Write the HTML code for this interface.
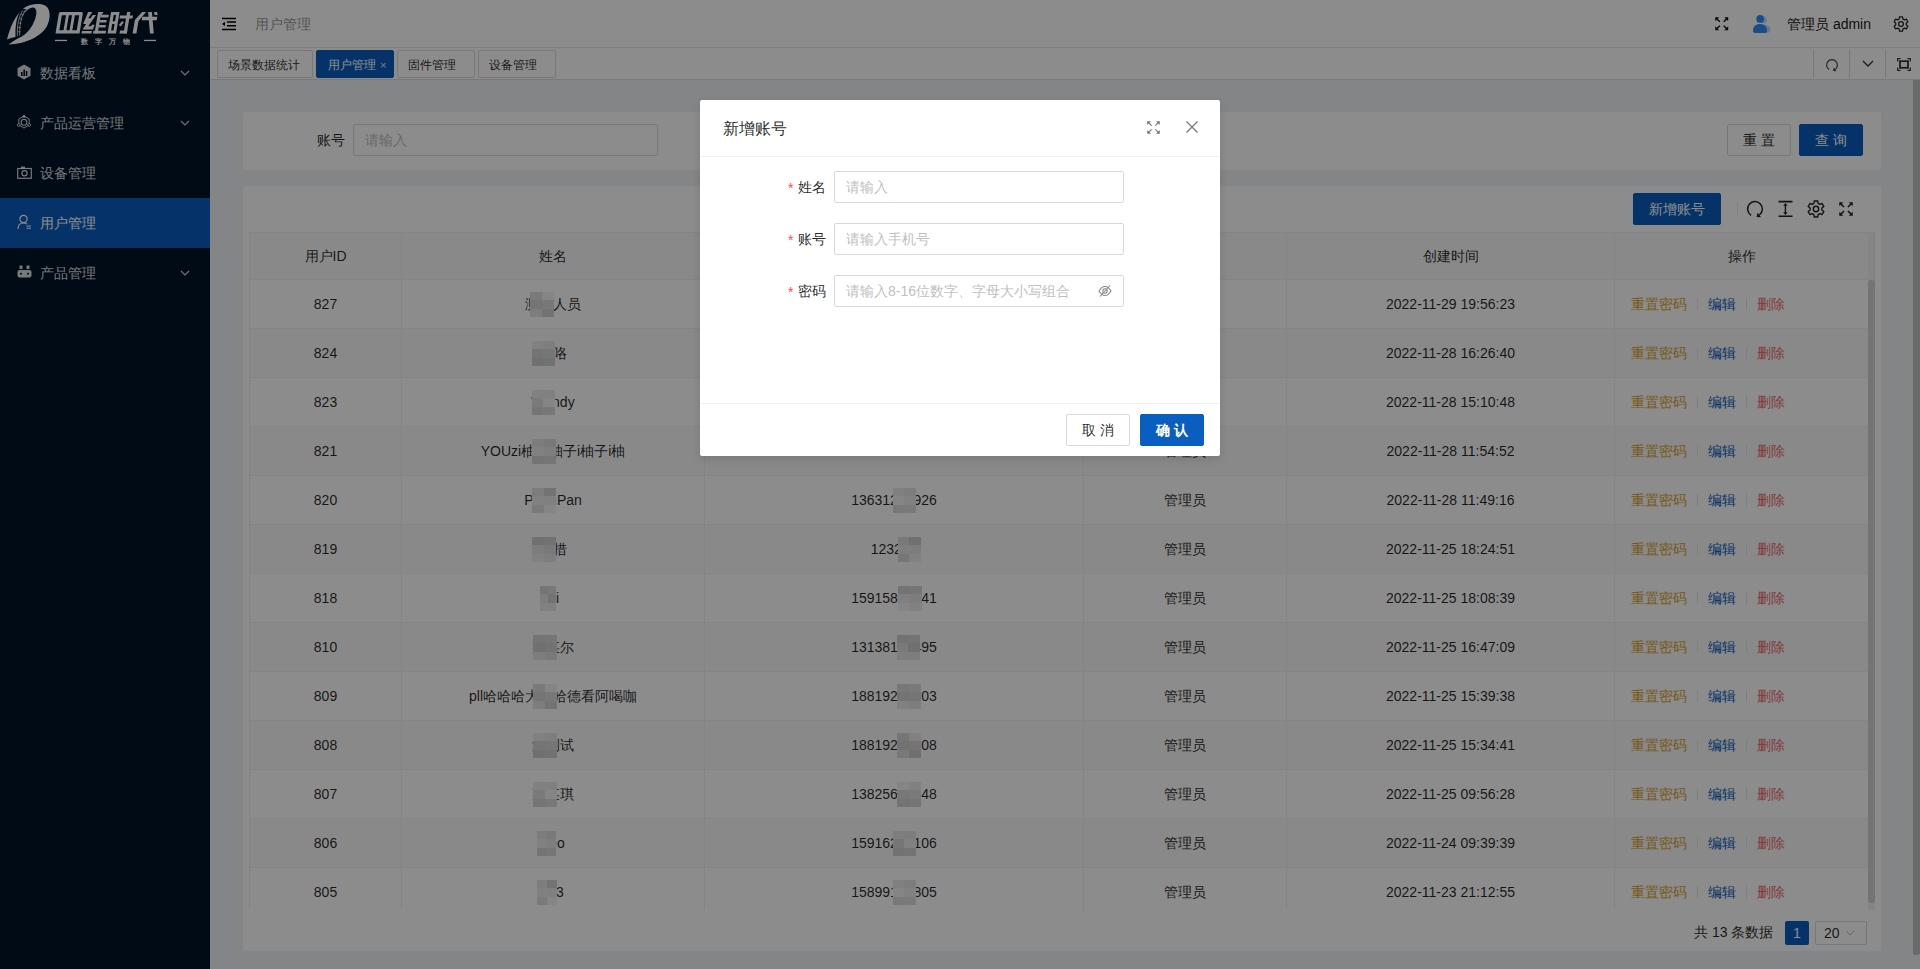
<!DOCTYPE html>
<html><head><meta charset="utf-8">
<style>
*{box-sizing:border-box;margin:0;padding:0}
html,body{width:1920px;height:969px;overflow:hidden;font-family:"Liberation Sans",sans-serif;font-size:14px;color:rgba(0,0,0,.85);background:#f0f2f5;position:relative}
.abs{position:absolute}
#side{position:absolute;left:0;top:0;width:210px;height:969px;background:#001529;overflow:hidden}
.mt{position:absolute;left:40px;height:50px;line-height:50px;color:rgba(255,255,255,.85);font-size:14px;white-space:nowrap}
#hdr{position:absolute;left:210px;top:0;width:1710px;height:48px;background:#fff;border-bottom:1px solid #e6e6e6}
#tabs{position:absolute;left:210px;top:48px;width:1710px;height:32px;background:#fff;border-bottom:1px solid #dcdcdc}
.tab{position:absolute;top:50px;height:28px;border:1px solid #dcdcdc;border-radius:2px;font-size:12px;line-height:27px;padding-top:1px;color:rgba(0,0,0,.85);background:#fff;white-space:nowrap}
.tab.on{background:#0a5ec0;border-color:#0a5ec0;color:#fff}
.card{position:absolute;background:#fff;border-radius:2px}
.inp{position:absolute;border:1px solid #d9d9d9;border-radius:2px;background:#fff;color:#bfbfbf;font-size:14px;line-height:30px;padding-left:11px;white-space:nowrap}
.btn{position:absolute;border:1px solid #d9d9d9;border-radius:2px;background:#fff;text-align:center;font-size:14px;line-height:30px;color:rgba(0,0,0,.85);white-space:nowrap}
.btn.pri{background:#0a5ec0;border-color:#0a5ec0;color:#fff}
.th{position:absolute;top:232px;height:48px;line-height:47px;padding-top:1px;text-align:center;background:#fafafa;border-bottom:1px solid #f0f0f0;border-right:1px solid #f0f0f0;white-space:nowrap}
.td{position:absolute;height:49px;line-height:48px;text-align:center;border-bottom:1px solid #f0f0f0;border-right:1px solid #f0f0f0;white-space:nowrap;overflow:hidden}
.blr{display:inline-block;height:24px;vertical-align:middle;background:linear-gradient(rgba(95,95,95,.38) 0,rgba(95,95,95,.38) 50%,rgba(130,130,130,.22) 50%,rgba(130,130,130,.22) 100%);margin-top:-4px}
.op1{color:#d9a32e}.op2{color:#0a5ec0}.op3{color:#ec6a6e}
.sep{display:inline-block;width:1px;height:12px;background:#e8e8e8;vertical-align:middle;margin:0 10px;margin-top:-2px}
#mask{position:absolute;left:0;top:0;width:1920px;height:969px;background:rgba(0,0,0,.45)}
#modal{position:absolute;left:700px;top:100px;width:520px;height:356px;background:#fff;border-radius:2px;box-shadow:0 3px 10px rgba(0,0,0,.12)}
.lbl{position:absolute;font-size:14px;color:rgba(0,0,0,.85);white-space:nowrap}
.req{color:#ff4d4f;font-family:"Liberation Sans",sans-serif;font-size:14px;margin-right:5px;position:relative;top:1px}
</style></head><body>

<div id="side">
<svg class="abs" style="left:0;top:0" width="210" height="48" viewBox="0 0 210 48">
<path d="M7 39.5 C 10 27, 16 14, 24 8 C 30 4, 40 2.5, 46 6 C 51 10, 50.5 19, 47 26 C 41 37, 25 44, 8.5 44.5 C 14 40.5, 19 37.5, 24 35.5 C 18 36, 12 37.5, 7 39.5 Z" fill="#fff"/>
<ellipse cx="26.6" cy="21.8" rx="16" ry="6.8" transform="rotate(-61 26.6 21.8)" fill="#001529"/>
<path d="M22 8.8 C 17.5 14, 14.8 24, 15.6 37.5 L 19.5 36.5 C 19 27, 21 16, 26.5 9.2 Z" fill="#001529"/>
<path d="M22.8 10.5 C 19 16, 16.8 25, 17.4 36.2" fill="none" stroke="#fff" stroke-width="0.75"/>
<path d="M25.2 10 C 21.5 15.5, 19.3 25, 19.7 35.5" fill="none" stroke="#fff" stroke-width="0.75"/>
<path d="M20.8 14.2 L 23.8 15 M19.6 18.6 L 22.4 19.2 M18.6 23 L 21.4 23.4 M18 27.4 L 20.8 27.6 M17.8 31.8 L 20.5 31.8" stroke="#fff" stroke-width="0.7"/>
<g fill="#fff" transform="translate(0,33.5) skewX(-9.5) translate(0,-33.5)">
 <path fill-rule="evenodd" d="M55.5 13.5 Q55.5 12 57 12 H78 Q79.5 12 79.5 13.5 V33.5 H55.5Z M58.8 15.3 V30.2 H63 V15.3Z M65.8 15.3 V30.2 H69 V15.3Z M71.8 15.3 V30.2 H76.2 V15.3Z"/>
 <path d="M84.5 12 L88.8 12 L85.6 18.2 L88 18.2 L89.6 15 L93 15 L87 26.2 L90 26.2 L90.6 24.8 L93.2 24.8 L92.2 29.6 L81.8 29.6 L84.6 24 L81.6 24 Z"/>
 <rect x="81.5" y="31" width="10" height="2.5"/>
 <rect x="94.5" y="12" width="3.2" height="21.5"/>
 <rect x="97.7" y="14.8" width="8" height="2.8"/>
 <rect x="97.7" y="20" width="6.8" height="2.6"/>
 <rect x="97.7" y="25" width="6.8" height="2.6"/>
 <rect x="93" y="30.7" width="12.7" height="2.8"/>
 <path d="M96 12 L100 12 L98.5 14.8 L95 14.8Z"/>
 <path fill-rule="evenodd" d="M107.5 12 H116 V33.5 H107.5Z M110.6 15 V21.3 H113 V15Z M110.6 24 V30.5 H113 V24Z"/>
 <rect x="117" y="15.5" width="13" height="3"/>
 <rect x="123.5" y="12" width="3.3" height="21.5"/>
 <rect x="119.5" y="30.5" width="7.3" height="3"/>
 <path d="M117.5 25 L120 21 L122 22.2 L119.5 26.5Z"/>
 <path d="M138.5 12 L142.5 12 L136.4 21 L136.4 33.5 L132.6 33.5 L132.6 20 Z"/>
 <rect x="139.5" y="16.8" width="15" height="3.4"/>
 <path d="M144.5 12 L148.3 12 L153.8 33.5 L150 33.5Z"/>
 <path d="M150.5 12 L153.5 12 L154.5 15 L151.5 15Z"/>
</g>
<rect x="55" y="39.8" width="12" height="1.3" fill="#fff"/><rect x="144" y="39.8" width="12" height="1.3" fill="#fff"/>
<text x="81" y="44" font-family="Liberation Sans,sans-serif" font-size="7" font-weight="bold" fill="#fff" letter-spacing="7">数字万物</text>
</svg>
<div class="mt" style="top:48px;">数据看板</div>
<svg class="abs" style="left:180px;top:70px" width="10" height="6" viewBox="0 0 10 6"><path d="M1 1 L5 5 L9 1" fill="none" stroke="rgba(255,255,255,.8)" stroke-width="1.2"/></svg>
<div class="mt" style="top:98px;">产品运营管理</div>
<svg class="abs" style="left:180px;top:120px" width="10" height="6" viewBox="0 0 10 6"><path d="M1 1 L5 5 L9 1" fill="none" stroke="rgba(255,255,255,.8)" stroke-width="1.2"/></svg>
<div class="mt" style="top:148px;">设备管理</div>
<div class="abs" style="left:0;top:198px;width:210px;height:50px;background:#0a5ec0"></div>
<div class="mt" style="top:198px;color:#fff">用户管理</div>
<div class="mt" style="top:248px;">产品管理</div>
<svg class="abs" style="left:180px;top:270px" width="10" height="6" viewBox="0 0 10 6"><path d="M1 1 L5 5 L9 1" fill="none" stroke="rgba(255,255,255,.8)" stroke-width="1.2"/></svg>
<svg class="abs" viewBox="0 0 14 16" style="left:17px;top:64px;width:14px;height:16px"><path d="M7 0.5 L13.5 4.2 V11.8 L7 15.5 L0.5 11.8 V4.2Z" fill="rgba(255,255,255,.85)"/><rect x="4" y="8" width="1.6" height="4" fill="#001529"/><rect x="6.4" y="5.5" width="1.6" height="6.5" fill="#001529"/><rect x="8.8" y="7" width="1.6" height="5" fill="#001529"/></svg>
<svg class="abs" style="left:16px;top:114px" width="16" height="16" viewBox="0 0 16 16"><path d="M8.00 2.00 L13.20 5.00 L13.20 11.00 L8.00 14.00 L2.80 11.00 L2.80 5.00Z" fill="none" stroke="rgba(255,255,255,.8)" stroke-width="1"/><circle cx="8" cy="8.3" r="2.9" fill="none" stroke="rgba(255,255,255,.8)" stroke-width="1.1"/><circle cx="8.00" cy="2.50" r="1.4" fill="rgba(255,255,255,.8)"/><circle cx="13.20" cy="11.00" r="1.4" fill="#001529" stroke="rgba(255,255,255,.8)" stroke-width="0.9"/><circle cx="2.80" cy="11.00" r="1.4" fill="#001529" stroke="rgba(255,255,255,.8)" stroke-width="0.9"/></svg>
<svg class="abs" style="left:17px;top:166px" width="15" height="13" viewBox="0 0 15 13"><rect x="0.7" y="2.5" width="13.6" height="9.8" fill="none" stroke="rgba(255,255,255,.85)" stroke-width="1.2"/><rect x="4" y="0.6" width="4" height="2" fill="rgba(255,255,255,.85)"/><circle cx="7.5" cy="7.3" r="2.6" fill="none" stroke="rgba(255,255,255,.85)" stroke-width="1.2"/></svg>
<svg class="abs" style="left:17px;top:214px" width="15" height="16" viewBox="0 0 15 16"><circle cx="6.5" cy="5" r="3.6" fill="none" stroke="#fff" stroke-width="1.2"/><path d="M1 15 C1 10.5 3.5 9 6.5 9 C8 9 9 9.3 10 10" fill="none" stroke="#fff" stroke-width="1.2"/><path d="M9.5 12 H14 M9.5 14.3 H14" stroke="#fff" stroke-width="1.1"/></svg>
<svg class="abs" style="left:17px;top:265px" width="15" height="13" viewBox="0 0 15 13"><rect x="0.5" y="5" width="14" height="7.5" rx="2" fill="rgba(255,255,255,.85)"/><rect x="2.5" y="0.5" width="3" height="3.5" fill="rgba(255,255,255,.85)"/><rect x="9.5" y="0.5" width="3" height="3.5" fill="rgba(255,255,255,.85)"/><circle cx="4" cy="8.7" r="1" fill="#001529"/><circle cx="11" cy="8.7" r="1" fill="#001529"/></svg>
</div>
<div id="hdr"></div>
<svg class="abs" style="left:222px;top:17px" width="14" height="14" viewBox="0 0 14 14"><path d="M0 1.4 H14 M5 5.1 H14 M5 8.8 H14 M0 12.4 H14" stroke="#000" stroke-width="1.5"/><path d="M0 6.9 L3 4.7 V9.1Z" fill="#000"/></svg>
<div class="abs" style="left:255px;top:14px;font-size:14px;line-height:20px;color:rgba(0,0,0,.45)">用户管理</div>
<svg class="abs" style="left:1715px;top:17px" width="13.5" height="13.5" viewBox="0 0 14 14"><g stroke="#111" stroke-width="1.4" fill="none"><path d="M1 1 L5 5 M9 5 L13 1 M1 13 L5 9 M9 9 L13 13"/></g><g fill="#111"><path d="M0.3 0.3 H4.3 L0.3 4.3Z"/><path d="M13.7 0.3 V4.3 L9.7 0.3Z"/><path d="M0.3 13.7 V9.7 L4.3 13.7Z"/><path d="M13.7 13.7 H9.7 L13.7 9.7Z"/></g></svg>
<svg class="abs" style="left:1752px;top:14px" width="20" height="20" viewBox="0 0 20 20"><circle cx="11.5" cy="6" r="3.4" fill="#308cf8" opacity=".3"/><path d="M11 10.5 C15.5 10.5 18.5 12 18.5 15.5 C18.5 18 17 19 14.5 19 H10Z" fill="#308cf8" opacity=".3"/><circle cx="8.2" cy="4.9" r="3.9" fill="#308cf8"/><path d="M1 17 C1 12 4 10 8 10 C12 10 15 12 15 17 C15 18.5 14 19 12.5 19 H3.5 C2 19 1 18.5 1 17Z" fill="#308cf8"/></svg>
<div class="abs" style="left:1787px;top:14px;font-size:14px;line-height:20px;color:rgba(0,0,0,.92);white-space:nowrap">管理员 admin</div>
<svg class="abs" style="left:1893px;top:16px" width="16" height="16" viewBox="0 0 16 16"><path d="M6.11 3.07 L6.50 0.96 L9.50 0.96 L9.89 3.07 L11.32 3.90 L13.35 3.18 L14.85 5.78 L13.21 7.17 L13.21 8.83 L14.85 10.22 L13.35 12.82 L11.32 12.10 L9.89 12.93 L9.50 15.04 L6.50 15.04 L6.11 12.93 L4.68 12.10 L2.65 12.82 L1.15 10.22 L2.79 8.83 L2.79 7.17 L1.15 5.78 L2.65 3.18 L4.68 3.90Z" fill="none" stroke="#222" stroke-width="1.25" stroke-linejoin="round"/><circle cx="8.0" cy="8.0" r="2.40" fill="none" stroke="#222" stroke-width="1.25"/></svg>
<div id="tabs"></div>
<div class="tab" style="left:217px;width:96px;padding-left:10px">场景数据统计</div>
<div class="tab on" style="left:316px;width:78px;padding-left:11px">用户管理<span style="font-size:11px;margin-left:4px;opacity:.85">×</span></div>
<div class="tab" style="left:397px;width:78px;padding-left:10px">固件管理</div>
<div class="tab" style="left:478px;width:78px;padding-left:10px">设备管理</div>
<div class="abs" style="left:1813px;top:50px;width:1px;height:28px;background:#dcdcdc"></div>
<div class="abs" style="left:1849px;top:50px;width:1px;height:28px;background:#dcdcdc"></div>
<div class="abs" style="left:1885px;top:50px;width:1px;height:28px;background:#dcdcdc"></div>
<svg class="abs" style="left:1862px;top:60px" width="12" height="8" viewBox="0 0 12 8"><path d="M1 1 L6 6 L11 1" fill="none" stroke="#333" stroke-width="1.4"/></svg>
<svg class="abs" style="left:1897px;top:58px" width="14" height="13" viewBox="0 0 14 13"><path d="M0.7 3.5 V0.7 H3.5 M10.5 0.7 H13.3 V3.5 M13.3 9.5 V12.3 H10.5 M3.5 12.3 H0.7 V9.5" fill="none" stroke="#333" stroke-width="1.2"/><rect x="3" y="3.2" width="8" height="6.6" fill="none" stroke="#333" stroke-width="1.8"/></svg>
<div class="abs" style="left:1913px;top:80px;width:7px;height:875px;background:#c1c1c1;border-radius:0 0 3px 3px"></div>
<div class="card" style="left:243px;top:112px;width:1638px;height:58px"></div>
<div class="lbl" style="left:317px;top:130px;line-height:20px">账号</div>
<div class="inp" style="left:353px;top:124px;width:305px;height:32px">请输入</div>
<div class="btn" style="left:1727px;top:124px;width:64px;height:32px;letter-spacing:4px;padding-left:4px">重置</div>
<div class="btn pri" style="left:1799px;top:124px;width:64px;height:32px;letter-spacing:4px;padding-left:4px">查询</div>
<div class="card" style="left:243px;top:186px;width:1638px;height:765px"></div>
<div class="btn pri" style="left:1633px;top:193px;width:88px;height:32px">新增账号</div>
<div class="abs" style="left:1737px;top:202px;width:1px;height:13px;background:#e8e8e8"></div>
<svg class="abs" style="left:1746px;top:200px" width="18" height="18" viewBox="0 0 18 18"><path d="M5.08 15.28 A7.4 7.4 0 1 1 13.35 14.99" fill="none" stroke="#222" stroke-width="1.5"/><path d="M10.55 17.02 L15.04 17.32 L11.66 12.66Z" fill="#222"/></svg>
<svg class="abs" style="left:1778px;top:200px" width="15" height="18" viewBox="0 0 15 18"><path d="M0.5 1.6 H14.5 M0.5 16.3 H14.5" stroke="#222" stroke-width="1.6"/><path d="M7.4 5 V13" stroke="#222" stroke-width="1.4"/><path d="M7.4 3 L5.2 5.8 H9.6Z M7.4 15 L5.2 12.2 H9.6Z" fill="#222"/></svg>
<svg class="abs" style="left:1807px;top:200px" width="18" height="18" viewBox="0 0 18 18"><path d="M6.87 3.45 L7.30 0.98 L10.70 0.98 L11.13 3.45 L12.74 4.38 L15.09 3.51 L16.80 6.47 L14.87 8.07 L14.87 9.93 L16.80 11.53 L15.09 14.49 L12.74 13.62 L11.13 14.55 L10.70 17.02 L7.30 17.02 L6.87 14.55 L5.26 13.62 L2.91 14.49 L1.20 11.53 L3.13 9.93 L3.13 8.07 L1.20 6.47 L2.91 3.51 L5.26 4.38Z" fill="none" stroke="#222" stroke-width="1.4" stroke-linejoin="round"/><circle cx="9.0" cy="9.0" r="2.70" fill="none" stroke="#222" stroke-width="1.4"/></svg>
<svg class="abs" style="left:1825px;top:58px" width="14" height="14" viewBox="0 0 14 14"><path d="M4.14 11.58 A5.4 5.4 0 1 1 10.17 11.37" fill="none" stroke="#444" stroke-width="1.2"/><path d="M8.00 12.95 L11.49 13.18 L8.86 9.56Z" fill="#444"/></svg>
<svg class="abs" style="left:1839px;top:202px" width="14" height="14" viewBox="0 0 14 14"><g stroke="#222" stroke-width="1.6" fill="none"><path d="M1 1 L5 5 M9 5 L13 1 M1 13 L5 9 M9 9 L13 13"/></g><g fill="#222"><path d="M0.3 0.3 H4.3 L0.3 4.3Z"/><path d="M13.7 0.3 V4.3 L9.7 0.3Z"/><path d="M0.3 13.7 V9.7 L4.3 13.7Z"/><path d="M13.7 13.7 H9.7 L13.7 9.7Z"/></g></svg>
<div class="th" style="left:250px;width:152px;border-right:1px solid #f0f0f0">用户ID</div>
<div class="th" style="left:402px;width:303px;border-right:1px solid #f0f0f0">姓名</div>
<div class="th" style="left:705px;width:379px;border-right:1px solid #f0f0f0">账号</div>
<div class="th" style="left:1084px;width:203px;border-right:1px solid #f0f0f0">角色</div>
<div class="th" style="left:1287px;width:328px;border-right:1px solid #f0f0f0">创建时间</div>
<div class="th" style="left:1615px;width:253px;border-right:none">操作</div>
<div class="abs" style="left:1868px;top:232px;width:7px;height:48px;background:#f2f2f2;border-right:1px solid #e8e8e8;border-bottom:1px solid #f0f0f0"></div>
<div class="abs" style="left:0;top:280px;width:1920px;height:630px;overflow:hidden">
<div class="td" style="left:250px;top:0px;width:152px;background:#fff;">827</div>
<div class="td" style="left:402px;top:0px;width:303px;background:#fff;">测试人员</div>
<div class="td" style="left:705px;top:0px;width:379px;background:#fff;">15000000001</div>
<div class="td" style="left:1084px;top:0px;width:203px;background:#fff;">管理员</div>
<div class="td" style="left:1287px;top:0px;width:328px;background:#fff;">2022-11-29 19:56:23</div>
<div class="td" style="left:1615px;top:0px;width:253px;background:#fff;border-right:none;text-align:left;padding-left:16px;"><span class="op1">重置密码</span><span class="sep"></span><span class="op2">编辑</span><span class="sep"></span><span class="op3">删除</span></div>
<div class="abs" style="left:530px;top:12px;width:12px;height:8px;background:#dedede"></div>
<div class="abs" style="left:542px;top:12px;width:12px;height:8px;background:#f2f2f2"></div>
<div class="abs" style="left:530px;top:20px;width:12px;height:9px;background:#d6d6d6"></div>
<div class="abs" style="left:542px;top:20px;width:12px;height:9px;background:#dadada"></div>
<div class="abs" style="left:530px;top:29px;width:12px;height:8px;background:#e3e3e3"></div>
<div class="abs" style="left:542px;top:29px;width:12px;height:8px;background:#d2d2d2"></div>
<div class="td" style="left:250px;top:49px;width:152px;background:#fafafa;">824</div>
<div class="td" style="left:402px;top:49px;width:303px;background:#fafafa;">某咯</div>
<div class="td" style="left:705px;top:49px;width:379px;background:#fafafa;">15000000002</div>
<div class="td" style="left:1084px;top:49px;width:203px;background:#fafafa;">管理员</div>
<div class="td" style="left:1287px;top:49px;width:328px;background:#fafafa;">2022-11-28 16:26:40</div>
<div class="td" style="left:1615px;top:49px;width:253px;background:#fafafa;border-right:none;text-align:left;padding-left:16px;"><span class="op1">重置密码</span><span class="sep"></span><span class="op2">编辑</span><span class="sep"></span><span class="op3">删除</span></div>
<div class="abs" style="left:532px;top:61px;width:11px;height:8px;background:#ececec"></div>
<div class="abs" style="left:543px;top:61px;width:12px;height:8px;background:#e6e6e6"></div>
<div class="abs" style="left:532px;top:69px;width:11px;height:9px;background:#d4d4d4"></div>
<div class="abs" style="left:543px;top:69px;width:12px;height:9px;background:#d8d8d8"></div>
<div class="abs" style="left:532px;top:78px;width:11px;height:8px;background:#cccccc"></div>
<div class="abs" style="left:543px;top:78px;width:12px;height:8px;background:#d0d0d0"></div>
<div class="td" style="left:250px;top:98px;width:152px;background:#fff;">823</div>
<div class="td" style="left:402px;top:98px;width:303px;background:#fff;">Wendy</div>
<div class="td" style="left:705px;top:98px;width:379px;background:#fff;">15000000003</div>
<div class="td" style="left:1084px;top:98px;width:203px;background:#fff;">管理员</div>
<div class="td" style="left:1287px;top:98px;width:328px;background:#fff;">2022-11-28 15:10:48</div>
<div class="td" style="left:1615px;top:98px;width:253px;background:#fff;border-right:none;text-align:left;padding-left:16px;"><span class="op1">重置密码</span><span class="sep"></span><span class="op2">编辑</span><span class="sep"></span><span class="op3">删除</span></div>
<div class="abs" style="left:532px;top:110px;width:11px;height:8px;background:#ececec"></div>
<div class="abs" style="left:543px;top:110px;width:12px;height:8px;background:#e9e9e9"></div>
<div class="abs" style="left:532px;top:118px;width:11px;height:9px;background:#dedede"></div>
<div class="abs" style="left:543px;top:118px;width:12px;height:9px;background:#f2f2f2"></div>
<div class="abs" style="left:532px;top:127px;width:11px;height:8px;background:#d6d6d6"></div>
<div class="abs" style="left:543px;top:127px;width:12px;height:8px;background:#dadada"></div>
<div class="td" style="left:250px;top:147px;width:152px;background:#fafafa;">821</div>
<div class="td" style="left:402px;top:147px;width:303px;background:#fafafa;">YOUzi柚子柚子i柚子i柚</div>
<div class="td" style="left:705px;top:147px;width:379px;background:#fafafa;">15000000004</div>
<div class="td" style="left:1084px;top:147px;width:203px;background:#fafafa;">管理员</div>
<div class="td" style="left:1287px;top:147px;width:328px;background:#fafafa;">2022-11-28 11:54:52</div>
<div class="td" style="left:1615px;top:147px;width:253px;background:#fafafa;border-right:none;text-align:left;padding-left:16px;"><span class="op1">重置密码</span><span class="sep"></span><span class="op2">编辑</span><span class="sep"></span><span class="op3">删除</span></div>
<div class="abs" style="left:532px;top:159px;width:12px;height:8px;background:#e3e3e3"></div>
<div class="abs" style="left:544px;top:159px;width:12px;height:8px;background:#dddddd"></div>
<div class="abs" style="left:532px;top:167px;width:12px;height:9px;background:#ececec"></div>
<div class="abs" style="left:544px;top:167px;width:12px;height:9px;background:#e6e6e6"></div>
<div class="abs" style="left:532px;top:176px;width:12px;height:8px;background:#d4d4d4"></div>
<div class="abs" style="left:544px;top:176px;width:12px;height:8px;background:#d8d8d8"></div>
<div class="td" style="left:250px;top:196px;width:152px;background:#fff;">820</div>
<div class="td" style="left:402px;top:196px;width:303px;background:#fff;">PeenPan</div>
<div class="td" style="left:705px;top:196px;width:379px;background:#fff;">13631234926</div>
<div class="td" style="left:1084px;top:196px;width:203px;background:#fff;">管理员</div>
<div class="td" style="left:1287px;top:196px;width:328px;background:#fff;">2022-11-28 11:49:16</div>
<div class="td" style="left:1615px;top:196px;width:253px;background:#fff;border-right:none;text-align:left;padding-left:16px;"><span class="op1">重置密码</span><span class="sep"></span><span class="op2">编辑</span><span class="sep"></span><span class="op3">删除</span></div>
<div class="abs" style="left:532px;top:208px;width:12px;height:8px;background:#e3e3e3"></div>
<div class="abs" style="left:544px;top:208px;width:12px;height:8px;background:#d2d2d2"></div>
<div class="abs" style="left:532px;top:216px;width:12px;height:9px;background:#ececec"></div>
<div class="abs" style="left:544px;top:216px;width:12px;height:9px;background:#e9e9e9"></div>
<div class="abs" style="left:532px;top:225px;width:12px;height:8px;background:#dedede"></div>
<div class="abs" style="left:544px;top:225px;width:12px;height:8px;background:#f2f2f2"></div>
<div class="abs" style="left:893px;top:208px;width:11px;height:8px;background:#e9e9e9"></div>
<div class="abs" style="left:904px;top:208px;width:12px;height:8px;background:#e3e3e3"></div>
<div class="abs" style="left:893px;top:216px;width:11px;height:9px;background:#f2f2f2"></div>
<div class="abs" style="left:904px;top:216px;width:12px;height:9px;background:#ececec"></div>
<div class="abs" style="left:893px;top:225px;width:11px;height:8px;background:#dadada"></div>
<div class="abs" style="left:904px;top:225px;width:12px;height:8px;background:#dedede"></div>
<div class="td" style="left:250px;top:245px;width:152px;background:#fafafa;">819</div>
<div class="td" style="left:402px;top:245px;width:303px;background:#fafafa;">某措</div>
<div class="td" style="left:705px;top:245px;width:379px;background:#fafafa;">123245</div>
<div class="td" style="left:1084px;top:245px;width:203px;background:#fafafa;">管理员</div>
<div class="td" style="left:1287px;top:245px;width:328px;background:#fafafa;">2022-11-25 18:24:51</div>
<div class="td" style="left:1615px;top:245px;width:253px;background:#fafafa;border-right:none;text-align:left;padding-left:16px;"><span class="op1">重置密码</span><span class="sep"></span><span class="op2">编辑</span><span class="sep"></span><span class="op3">删除</span></div>
<div class="abs" style="left:532px;top:257px;width:12px;height:8px;background:#cccccc"></div>
<div class="abs" style="left:544px;top:257px;width:12px;height:8px;background:#d0d0d0"></div>
<div class="abs" style="left:532px;top:265px;width:12px;height:9px;background:#e3e3e3"></div>
<div class="abs" style="left:544px;top:265px;width:12px;height:9px;background:#dddddd"></div>
<div class="abs" style="left:532px;top:274px;width:12px;height:8px;background:#ececec"></div>
<div class="abs" style="left:544px;top:274px;width:12px;height:8px;background:#e6e6e6"></div>
<div class="abs" style="left:898px;top:257px;width:11px;height:8px;background:#dddddd"></div>
<div class="abs" style="left:909px;top:257px;width:12px;height:8px;background:#cccccc"></div>
<div class="abs" style="left:898px;top:265px;width:11px;height:9px;background:#e6e6e6"></div>
<div class="abs" style="left:909px;top:265px;width:12px;height:9px;background:#e3e3e3"></div>
<div class="abs" style="left:898px;top:274px;width:11px;height:8px;background:#d8d8d8"></div>
<div class="abs" style="left:909px;top:274px;width:12px;height:8px;background:#ececec"></div>
<div class="td" style="left:250px;top:294px;width:152px;background:#fff;">818</div>
<div class="td" style="left:402px;top:294px;width:303px;background:#fff;">Xi</div>
<div class="td" style="left:705px;top:294px;width:379px;background:#fff;">15915812341</div>
<div class="td" style="left:1084px;top:294px;width:203px;background:#fff;">管理员</div>
<div class="td" style="left:1287px;top:294px;width:328px;background:#fff;">2022-11-25 18:08:39</div>
<div class="td" style="left:1615px;top:294px;width:253px;background:#fff;border-right:none;text-align:left;padding-left:16px;"><span class="op1">重置密码</span><span class="sep"></span><span class="op2">编辑</span><span class="sep"></span><span class="op3">删除</span></div>
<div class="abs" style="left:540px;top:306px;width:8px;height:8px;background:#d6d6d6"></div>
<div class="abs" style="left:548px;top:306px;width:8px;height:8px;background:#dadada"></div>
<div class="abs" style="left:540px;top:314px;width:8px;height:9px;background:#e3e3e3"></div>
<div class="abs" style="left:548px;top:314px;width:8px;height:9px;background:#d2d2d2"></div>
<div class="abs" style="left:540px;top:323px;width:8px;height:8px;background:#ececec"></div>
<div class="abs" style="left:548px;top:323px;width:8px;height:8px;background:#e9e9e9"></div>
<div class="abs" style="left:898px;top:306px;width:12px;height:8px;background:#d2d2d2"></div>
<div class="abs" style="left:910px;top:306px;width:12px;height:8px;background:#d6d6d6"></div>
<div class="abs" style="left:898px;top:314px;width:12px;height:9px;background:#e9e9e9"></div>
<div class="abs" style="left:910px;top:314px;width:12px;height:9px;background:#e3e3e3"></div>
<div class="abs" style="left:898px;top:323px;width:12px;height:8px;background:#f2f2f2"></div>
<div class="abs" style="left:910px;top:323px;width:12px;height:8px;background:#ececec"></div>
<div class="td" style="left:250px;top:343px;width:152px;background:#fafafa;">810</div>
<div class="td" style="left:402px;top:343px;width:303px;background:#fafafa;">某某尔</div>
<div class="td" style="left:705px;top:343px;width:379px;background:#fafafa;">13138123495</div>
<div class="td" style="left:1084px;top:343px;width:203px;background:#fafafa;">管理员</div>
<div class="td" style="left:1287px;top:343px;width:328px;background:#fafafa;">2022-11-25 16:47:09</div>
<div class="td" style="left:1615px;top:343px;width:253px;background:#fafafa;border-right:none;text-align:left;padding-left:16px;"><span class="op1">重置密码</span><span class="sep"></span><span class="op2">编辑</span><span class="sep"></span><span class="op3">删除</span></div>
<div class="abs" style="left:533px;top:355px;width:12px;height:8px;background:#d4d4d4"></div>
<div class="abs" style="left:545px;top:355px;width:12px;height:8px;background:#d8d8d8"></div>
<div class="abs" style="left:533px;top:363px;width:12px;height:9px;background:#cccccc"></div>
<div class="abs" style="left:545px;top:363px;width:12px;height:9px;background:#d0d0d0"></div>
<div class="abs" style="left:533px;top:372px;width:12px;height:8px;background:#e3e3e3"></div>
<div class="abs" style="left:545px;top:372px;width:12px;height:8px;background:#dddddd"></div>
<div class="abs" style="left:897px;top:355px;width:11px;height:8px;background:#d0d0d0"></div>
<div class="abs" style="left:908px;top:355px;width:12px;height:8px;background:#d4d4d4"></div>
<div class="abs" style="left:897px;top:363px;width:11px;height:9px;background:#dddddd"></div>
<div class="abs" style="left:908px;top:363px;width:12px;height:9px;background:#cccccc"></div>
<div class="abs" style="left:897px;top:372px;width:11px;height:8px;background:#e6e6e6"></div>
<div class="abs" style="left:908px;top:372px;width:12px;height:8px;background:#e3e3e3"></div>
<div class="td" style="left:250px;top:392px;width:152px;background:#fff;">809</div>
<div class="td" style="left:402px;top:392px;width:303px;background:#fff;">pll哈哈哈大某哈德看阿喝咖</div>
<div class="td" style="left:705px;top:392px;width:379px;background:#fff;">18819212303</div>
<div class="td" style="left:1084px;top:392px;width:203px;background:#fff;">管理员</div>
<div class="td" style="left:1287px;top:392px;width:328px;background:#fff;">2022-11-25 15:39:38</div>
<div class="td" style="left:1615px;top:392px;width:253px;background:#fff;border-right:none;text-align:left;padding-left:16px;"><span class="op1">重置密码</span><span class="sep"></span><span class="op2">编辑</span><span class="sep"></span><span class="op3">删除</span></div>
<div class="abs" style="left:533px;top:404px;width:12px;height:8px;background:#dedede"></div>
<div class="abs" style="left:545px;top:404px;width:12px;height:8px;background:#f2f2f2"></div>
<div class="abs" style="left:533px;top:412px;width:12px;height:9px;background:#d6d6d6"></div>
<div class="abs" style="left:545px;top:412px;width:12px;height:9px;background:#dadada"></div>
<div class="abs" style="left:533px;top:421px;width:12px;height:8px;background:#e3e3e3"></div>
<div class="abs" style="left:545px;top:421px;width:12px;height:8px;background:#d2d2d2"></div>
<div class="abs" style="left:897px;top:404px;width:12px;height:8px;background:#dadada"></div>
<div class="abs" style="left:909px;top:404px;width:12px;height:8px;background:#dedede"></div>
<div class="abs" style="left:897px;top:412px;width:12px;height:9px;background:#d2d2d2"></div>
<div class="abs" style="left:909px;top:412px;width:12px;height:9px;background:#d6d6d6"></div>
<div class="abs" style="left:897px;top:421px;width:12px;height:8px;background:#e9e9e9"></div>
<div class="abs" style="left:909px;top:421px;width:12px;height:8px;background:#e3e3e3"></div>
<div class="td" style="left:250px;top:441px;width:152px;background:#fafafa;">808</div>
<div class="td" style="left:402px;top:441px;width:303px;background:#fafafa;">测测试</div>
<div class="td" style="left:705px;top:441px;width:379px;background:#fafafa;">18819212308</div>
<div class="td" style="left:1084px;top:441px;width:203px;background:#fafafa;">管理员</div>
<div class="td" style="left:1287px;top:441px;width:328px;background:#fafafa;">2022-11-25 15:34:41</div>
<div class="td" style="left:1615px;top:441px;width:253px;background:#fafafa;border-right:none;text-align:left;padding-left:16px;"><span class="op1">重置密码</span><span class="sep"></span><span class="op2">编辑</span><span class="sep"></span><span class="op3">删除</span></div>
<div class="abs" style="left:533px;top:453px;width:12px;height:8px;background:#ececec"></div>
<div class="abs" style="left:545px;top:453px;width:12px;height:8px;background:#e6e6e6"></div>
<div class="abs" style="left:533px;top:461px;width:12px;height:9px;background:#d4d4d4"></div>
<div class="abs" style="left:545px;top:461px;width:12px;height:9px;background:#d8d8d8"></div>
<div class="abs" style="left:533px;top:470px;width:12px;height:8px;background:#cccccc"></div>
<div class="abs" style="left:545px;top:470px;width:12px;height:8px;background:#d0d0d0"></div>
<div class="abs" style="left:897px;top:453px;width:12px;height:8px;background:#d8d8d8"></div>
<div class="abs" style="left:909px;top:453px;width:12px;height:8px;background:#ececec"></div>
<div class="abs" style="left:897px;top:461px;width:12px;height:9px;background:#d0d0d0"></div>
<div class="abs" style="left:909px;top:461px;width:12px;height:9px;background:#d4d4d4"></div>
<div class="abs" style="left:897px;top:470px;width:12px;height:8px;background:#dddddd"></div>
<div class="abs" style="left:909px;top:470px;width:12px;height:8px;background:#cccccc"></div>
<div class="td" style="left:250px;top:490px;width:152px;background:#fff;">807</div>
<div class="td" style="left:402px;top:490px;width:303px;background:#fff;">某某琪</div>
<div class="td" style="left:705px;top:490px;width:379px;background:#fff;">13825612348</div>
<div class="td" style="left:1084px;top:490px;width:203px;background:#fff;">管理员</div>
<div class="td" style="left:1287px;top:490px;width:328px;background:#fff;">2022-11-25 09:56:28</div>
<div class="td" style="left:1615px;top:490px;width:253px;background:#fff;border-right:none;text-align:left;padding-left:16px;"><span class="op1">重置密码</span><span class="sep"></span><span class="op2">编辑</span><span class="sep"></span><span class="op3">删除</span></div>
<div class="abs" style="left:533px;top:502px;width:12px;height:8px;background:#ececec"></div>
<div class="abs" style="left:545px;top:502px;width:12px;height:8px;background:#e9e9e9"></div>
<div class="abs" style="left:533px;top:510px;width:12px;height:9px;background:#dedede"></div>
<div class="abs" style="left:545px;top:510px;width:12px;height:9px;background:#f2f2f2"></div>
<div class="abs" style="left:533px;top:519px;width:12px;height:8px;background:#d6d6d6"></div>
<div class="abs" style="left:545px;top:519px;width:12px;height:8px;background:#dadada"></div>
<div class="abs" style="left:897px;top:502px;width:12px;height:8px;background:#f2f2f2"></div>
<div class="abs" style="left:909px;top:502px;width:12px;height:8px;background:#ececec"></div>
<div class="abs" style="left:897px;top:510px;width:12px;height:9px;background:#dadada"></div>
<div class="abs" style="left:909px;top:510px;width:12px;height:9px;background:#dedede"></div>
<div class="abs" style="left:897px;top:519px;width:12px;height:8px;background:#d2d2d2"></div>
<div class="abs" style="left:909px;top:519px;width:12px;height:8px;background:#d6d6d6"></div>
<div class="td" style="left:250px;top:539px;width:152px;background:#fafafa;">806</div>
<div class="td" style="left:402px;top:539px;width:303px;background:#fafafa;">Leo</div>
<div class="td" style="left:705px;top:539px;width:379px;background:#fafafa;">15916212106</div>
<div class="td" style="left:1084px;top:539px;width:203px;background:#fafafa;">管理员</div>
<div class="td" style="left:1287px;top:539px;width:328px;background:#fafafa;">2022-11-24 09:39:39</div>
<div class="td" style="left:1615px;top:539px;width:253px;background:#fafafa;border-right:none;text-align:left;padding-left:16px;"><span class="op1">重置密码</span><span class="sep"></span><span class="op2">编辑</span><span class="sep"></span><span class="op3">删除</span></div>
<div class="abs" style="left:537px;top:551px;width:9px;height:8px;background:#e3e3e3"></div>
<div class="abs" style="left:546px;top:551px;width:10px;height:8px;background:#dddddd"></div>
<div class="abs" style="left:537px;top:559px;width:9px;height:9px;background:#ececec"></div>
<div class="abs" style="left:546px;top:559px;width:10px;height:9px;background:#e6e6e6"></div>
<div class="abs" style="left:537px;top:568px;width:9px;height:8px;background:#d4d4d4"></div>
<div class="abs" style="left:546px;top:568px;width:10px;height:8px;background:#d8d8d8"></div>
<div class="abs" style="left:893px;top:551px;width:11px;height:8px;background:#e6e6e6"></div>
<div class="abs" style="left:904px;top:551px;width:12px;height:8px;background:#e3e3e3"></div>
<div class="abs" style="left:893px;top:559px;width:11px;height:9px;background:#d8d8d8"></div>
<div class="abs" style="left:904px;top:559px;width:12px;height:9px;background:#ececec"></div>
<div class="abs" style="left:893px;top:568px;width:11px;height:8px;background:#d0d0d0"></div>
<div class="abs" style="left:904px;top:568px;width:12px;height:8px;background:#d4d4d4"></div>
<div class="td" style="left:250px;top:588px;width:152px;background:#fff;">805</div>
<div class="td" style="left:402px;top:588px;width:303px;background:#fff;">某3</div>
<div class="td" style="left:705px;top:588px;width:379px;background:#fff;">15899121805</div>
<div class="td" style="left:1084px;top:588px;width:203px;background:#fff;">管理员</div>
<div class="td" style="left:1287px;top:588px;width:328px;background:#fff;">2022-11-23 21:12:55</div>
<div class="td" style="left:1615px;top:588px;width:253px;background:#fff;border-right:none;text-align:left;padding-left:16px;"><span class="op1">重置密码</span><span class="sep"></span><span class="op2">编辑</span><span class="sep"></span><span class="op3">删除</span></div>
<div class="abs" style="left:537px;top:600px;width:10px;height:8px;background:#e3e3e3"></div>
<div class="abs" style="left:547px;top:600px;width:10px;height:8px;background:#d2d2d2"></div>
<div class="abs" style="left:537px;top:608px;width:10px;height:9px;background:#ececec"></div>
<div class="abs" style="left:547px;top:608px;width:10px;height:9px;background:#e9e9e9"></div>
<div class="abs" style="left:537px;top:617px;width:10px;height:8px;background:#dedede"></div>
<div class="abs" style="left:547px;top:617px;width:10px;height:8px;background:#f2f2f2"></div>
<div class="abs" style="left:893px;top:600px;width:11px;height:8px;background:#e9e9e9"></div>
<div class="abs" style="left:904px;top:600px;width:12px;height:8px;background:#e3e3e3"></div>
<div class="abs" style="left:893px;top:608px;width:11px;height:9px;background:#f2f2f2"></div>
<div class="abs" style="left:904px;top:608px;width:12px;height:9px;background:#ececec"></div>
<div class="abs" style="left:893px;top:617px;width:11px;height:8px;background:#dadada"></div>
<div class="abs" style="left:904px;top:617px;width:12px;height:8px;background:#dedede"></div>
</div>
<div class="abs" style="left:1868px;top:280px;width:7px;height:630px;background:#f2f2f2"></div>
<div class="abs" style="left:1868px;top:280px;width:7px;height:623px;background:#d4d4d4;border-radius:3px"></div>
<div class="abs" style="left:249px;top:232px;width:1px;height:678px;background:#f0f0f0"></div>
<div class="abs" style="left:250px;top:232px;width:1625px;height:1px;background:#f0f0f0"></div>
<div class="abs" style="left:1694px;top:922px;line-height:20px;font-size:14px;white-space:nowrap">共 13 条数据</div>
<div class="abs" style="left:1785px;top:921px;width:24px;height:24px;background:#0a5ec0;border-radius:2px;color:#fff;text-align:center;line-height:24px;font-size:14px">1</div>
<div class="abs" style="left:1815px;top:921px;width:52px;height:24px;border:1px solid #d9d9d9;border-radius:2px;line-height:22px;padding-left:8px;font-size:14px">20</div>
<svg class="abs" style="left:1845px;top:930px" width="10" height="6" viewBox="0 0 10 6"><path d="M1 1 L5 5 L9 1" fill="none" stroke="#bbb" stroke-width="1"/></svg>
<div id="mask"></div>
<div id="modal">
<div class="abs" style="left:23px;top:18px;font-size:16px;line-height:22px;color:rgba(0,0,0,.85)">新增账号</div>
<div class="abs" style="left:0;top:56px;width:520px;height:1px;background:#f0f0f0"></div>
<svg class="abs" style="left:447px;top:21px" width="13" height="13" viewBox="0 0 14 14"><g stroke="#777" stroke-width="1.2" fill="none"><path d="M1 1 L5 5 M9 5 L13 1 M1 13 L5 9 M9 9 L13 13"/></g><g fill="#777"><path d="M0.3 0.3 H4.3 L0.3 4.3Z"/><path d="M13.7 0.3 V4.3 L9.7 0.3Z"/><path d="M0.3 13.7 V9.7 L4.3 13.7Z"/><path d="M13.7 13.7 H9.7 L13.7 9.7Z"/></g></svg>
<svg class="abs" style="left:486px;top:21px" width="12" height="12" viewBox="0 0 12 12"><path d="M0.5 0.5 L11.5 11.5 M11.5 0.5 L0.5 11.5" stroke="#777" stroke-width="1.2"/></svg>
<div class="lbl" style="left:88px;top:76px;line-height:22px"><span class="req">*</span>姓名</div>
<div class="inp" style="left:134px;top:71px;width:290px;height:32px">请输入</div>
<div class="lbl" style="left:88px;top:128px;line-height:22px"><span class="req">*</span>账号</div>
<div class="inp" style="left:134px;top:123px;width:290px;height:32px">请输入手机号</div>
<div class="lbl" style="left:88px;top:180px;line-height:22px"><span class="req">*</span>密码</div>
<div class="inp" style="left:134px;top:175px;width:290px;height:32px">请输入8-16位数字、字母大小写组合</div>
<svg class="abs" style="left:398px;top:185px" width="14" height="12" viewBox="0 0 14 12"><path d="M1 6 C3 2.5 5 1.5 7 1.5 C9 1.5 11 2.5 13 6 C11 9.5 9 10.5 7 10.5 C5 10.5 3 9.5 1 6Z" fill="none" stroke="#888" stroke-width="1.1"/><circle cx="7" cy="6" r="2.2" fill="none" stroke="#888" stroke-width="1.1"/><path d="M12 0.5 L2 11.5" stroke="#888" stroke-width="1.1"/></svg>
<div class="abs" style="left:0;top:303px;width:520px;height:1px;background:#f0f0f0"></div>
<div class="btn" style="left:366px;top:314px;width:64px;height:32px;letter-spacing:4px;padding-left:4px">取消</div>
<div class="btn pri" style="left:440px;top:314px;width:64px;height:32px;letter-spacing:4px;padding-left:4px;font-weight:bold">确认</div>
</div>
</body></html>
